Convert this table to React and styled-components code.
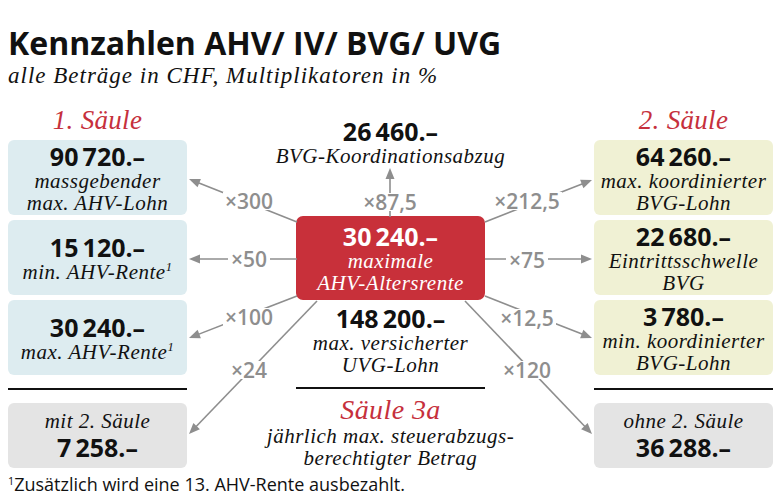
import React from 'react';
import styled, { createGlobalStyle } from 'styled-components';

const SANS = `"Open Sans", "Noto Sans", sans-serif`;
const SERIF = `"Liberation Serif", "Times New Roman", serif`;

const GlobalStyle = createGlobalStyle`
  html, body { margin: 0; padding: 0; background: #fff; }
  body { font-family: ${SANS}; color: #111; }
`;

const TONES = {
  blue: '#ddecf0',
  yellow: '#f0f1d4',
  gray: '#e4e4e4',
  red: '#c8303a',
};

const Page = styled.div`
  position: relative;
  width: 782px;
  height: 497px;
  box-sizing: border-box;
  padding: 24px 9px 0 8px;
  overflow: hidden;
`;

const Title = styled.h1`
  margin: 0;
  font-family: ${SANS};
  font-weight: 700;
  font-size: 32px;
  line-height: 38px;
  color: #111;
`;

const Subtitle = styled.p`
  margin: 1px 0 0;
  font-family: ${SERIF};
  font-style: italic;
  font-size: 23px;
  line-height: 26px;
  letter-spacing: 1px;
  color: #111;
`;

const Diagram = styled.div`
  display: grid;
  grid-template-columns: 179px 189px 179px;
  justify-content: space-between;
  margin-top: 11px;
`;

const Column = styled.div`
  display: flex;
  flex-direction: column;
  align-items: stretch;
  text-align: center;
`;

const PillarHeading = styled.div`
  height: 40px;
  font-family: ${SERIF};
  font-style: italic;
  font-size: 27px;
  line-height: 40px;
  letter-spacing: 0.3px;
  color: #c6303c;
`;

const BoxStack = styled.div`
  display: flex;
  flex-direction: column;
  gap: 5px;
`;

const InfoBox = styled.div`
  height: ${(p) => p.$h || 75}px;
  margin-top: ${(p) => p.$mt || 0}px;
  box-sizing: border-box;
  border-radius: 6px;
  background: ${(p) => TONES[p.$tone]};
  display: flex;
  flex-direction: column;
  justify-content: center;
  align-items: center;
  text-align: center;
`;

const Value = styled.div`
  font-family: ${SANS};
  font-weight: 700;
  font-size: 25px;
  line-height: 28px;
  color: ${(p) => (p.$light ? '#fff' : '#111')};
  white-space: nowrap;
`;

const Caption = styled.div`
  font-family: ${SERIF};
  font-style: italic;
  font-size: 21px;
  line-height: ${(p) => p.$lh || 22}px;
  letter-spacing: 0.5px;
  color: ${(p) => (p.$light ? '#fff' : '#111')};
  white-space: nowrap;
`;

const Sup = styled.sup`
  font-size: 0.6em;
  line-height: 0;
  vertical-align: 0.6em;
  font-style: ${(p) => (p.$upright ? 'normal' : 'italic')};
`;

const Rule = styled.div`
  height: 1.5px;
  background: #111;
  margin-top: ${(p) => p.$mt || 12}px;
`;

const TextBlock = styled.div`
  margin-top: ${(p) => p.$mt || 0}px;
  display: flex;
  flex-direction: column;
  align-items: center;
`;

const RedBox = styled(InfoBox)`
  height: 84px;
  border-radius: 7px;
`;

const Pillar3 = styled.div`
  font-family: ${SERIF};
  font-style: italic;
  font-size: 28px;
  line-height: 30px;
  letter-spacing: 0.4px;
  color: #c6303c;
`;

const Footnote = styled.p`
  margin: 5px 0 0;
  font-family: ${SANS};
  font-size: 18px;
  line-height: 20px;
  color: #111;
`;

const Overlay = styled.svg`
  position: absolute;
  left: 0;
  top: 0;
  width: 782px;
  height: 497px;
  pointer-events: none;
`;

const ArrowLabel = styled.text`
  font-family: ${SANS};
  font-weight: 600;
  font-size: 21px;
  fill: #8e8e8e;
`;

const ARROW_GRAY = '#8e8e8e';

const ARROWS = [
  { x1: 297, y1: 222, x2: 189, y2: 179, label: '×300', lx: 249, ly: 201, w: 52 },
  { x1: 297, y1: 259, x2: 189, y2: 259, label: '×50', lx: 249, ly: 259, w: 42 },
  { x1: 297, y1: 296, x2: 189, y2: 338, label: '×100', lx: 249, ly: 317, w: 52 },
  { x1: 317, y1: 301, x2: 189, y2: 434, label: '×24', lx: 249, ly: 370, w: 42 },
  { x1: 390, y1: 217, x2: 390, y2: 168, label: '×87,5', lx: 390, ly: 202, w: 58 },
  { x1: 485, y1: 222, x2: 592, y2: 180, label: '×212,5', lx: 527, ly: 201, w: 70 },
  { x1: 485, y1: 259, x2: 592, y2: 259, label: '×75', lx: 527, ly: 260, w: 42 },
  { x1: 485, y1: 296, x2: 592, y2: 338, label: '×12,5', lx: 527, ly: 318, w: 58 },
  { x1: 465, y1: 301, x2: 592, y2: 434, label: '×120', lx: 527, ly: 370, w: 52 },
];

function Arrow({ x1, y1, x2, y2, label, lx, ly, w }) {
  const dx = x2 - x1;
  const dy = y2 - y1;
  const len = Math.hypot(dx, dy);
  const ux = dx / len;
  const uy = dy / len;
  const hl = 11;
  const hw = 4.5;
  const bx = x2 - ux * hl;
  const by = y2 - uy * hl;
  const px = -uy;
  const py = ux;
  const pts = `${x2},${y2} ${bx + px * hw},${by + py * hw} ${bx - px * hw},${by - py * hw}`;
  return (
    <g>
      <line x1={x1} y1={y1} x2={bx + ux * 1} y2={by + uy * 1} stroke={ARROW_GRAY} strokeWidth="1.6" />
      <polygon points={pts} fill={ARROW_GRAY} />
      <rect x={lx - w / 2} y={ly - 9} width={w} height={18} fill="#fff" />
      <ArrowLabel x={lx} y={ly} textAnchor="middle" dominantBaseline="central">
        {label}
      </ArrowLabel>
    </g>
  );
}

const T = '\u2009';

export default function App() {
  return (
    <>
      <GlobalStyle />
      <Page>
        <Title>Kennzahlen AHV/ IV/ BVG/ UVG</Title>
        <Subtitle>alle Beträge in CHF, Multiplikatoren in %</Subtitle>
        <Diagram>
          <Column>
            <PillarHeading>1. Säule</PillarHeading>
            <BoxStack>
              <InfoBox $tone="blue">
                <Value>90{T}720.–</Value>
                <Caption>massgebender</Caption>
                <Caption>max. AHV-Lohn</Caption>
              </InfoBox>
              <InfoBox $tone="blue">
                <Value>15{T}120.–</Value>
                <Caption>min. AHV-Rente<Sup>1</Sup></Caption>
              </InfoBox>
              <InfoBox $tone="blue">
                <Value>30{T}240.–</Value>
                <Caption>max. AHV-Rente<Sup>1</Sup></Caption>
              </InfoBox>
            </BoxStack>
            <Rule $mt={13} />
            <InfoBox $tone="gray" $h={65} $mt={13}>
              <Caption $lh={24}>mit 2. Säule</Caption>
              <Value>7{T}258.–</Value>
            </InfoBox>
          </Column>

          <Column>
            <TextBlock $mt={17}>
              <Value>26{T}460.–</Value>
              <Caption>BVG-Koordinationsabzug</Caption>
            </TextBlock>
            <RedBox $tone="red" $mt={49}>
              <Value $light>30{T}240.–</Value>
              <Caption $light>maximale</Caption>
              <Caption $light>AHV-Altersrente</Caption>
            </RedBox>
            <TextBlock $mt={4}>
              <Value>148{T}200.–</Value>
              <Caption>max. versicherter</Caption>
              <Caption>UVG-Lohn</Caption>
            </TextBlock>
            <Rule $mt={11} />
            <TextBlock $mt={6}>
              <Pillar3>Säule 3a</Pillar3>
              <Caption>jährlich max. steuerabzugs-</Caption>
              <Caption>berechtigter Betrag</Caption>
            </TextBlock>
          </Column>

          <Column>
            <PillarHeading>2. Säule</PillarHeading>
            <BoxStack>
              <InfoBox $tone="yellow">
                <Value>64{T}260.–</Value>
                <Caption>max. koordinierter</Caption>
                <Caption>BVG-Lohn</Caption>
              </InfoBox>
              <InfoBox $tone="yellow">
                <Value>22{T}680.–</Value>
                <Caption>Eintrittsschwelle</Caption>
                <Caption>BVG</Caption>
              </InfoBox>
              <InfoBox $tone="yellow">
                <Value>3{T}780.–</Value>
                <Caption>min. koordinierter</Caption>
                <Caption>BVG-Lohn</Caption>
              </InfoBox>
            </BoxStack>
            <Rule $mt={13} />
            <InfoBox $tone="gray" $h={65} $mt={13}>
              <Caption $lh={24}>ohne 2. Säule</Caption>
              <Value>36{T}288.–</Value>
            </InfoBox>
          </Column>
        </Diagram>
        <Footnote>
          <Sup $upright>1</Sup>Zusätzlich wird eine 13. AHV-Rente ausbezahlt.
        </Footnote>
        <Overlay viewBox="0 0 782 497">
          {ARROWS.map((a) => (
            <Arrow key={a.label} {...a} />
          ))}
        </Overlay>
      </Page>
    </>
  );
}
